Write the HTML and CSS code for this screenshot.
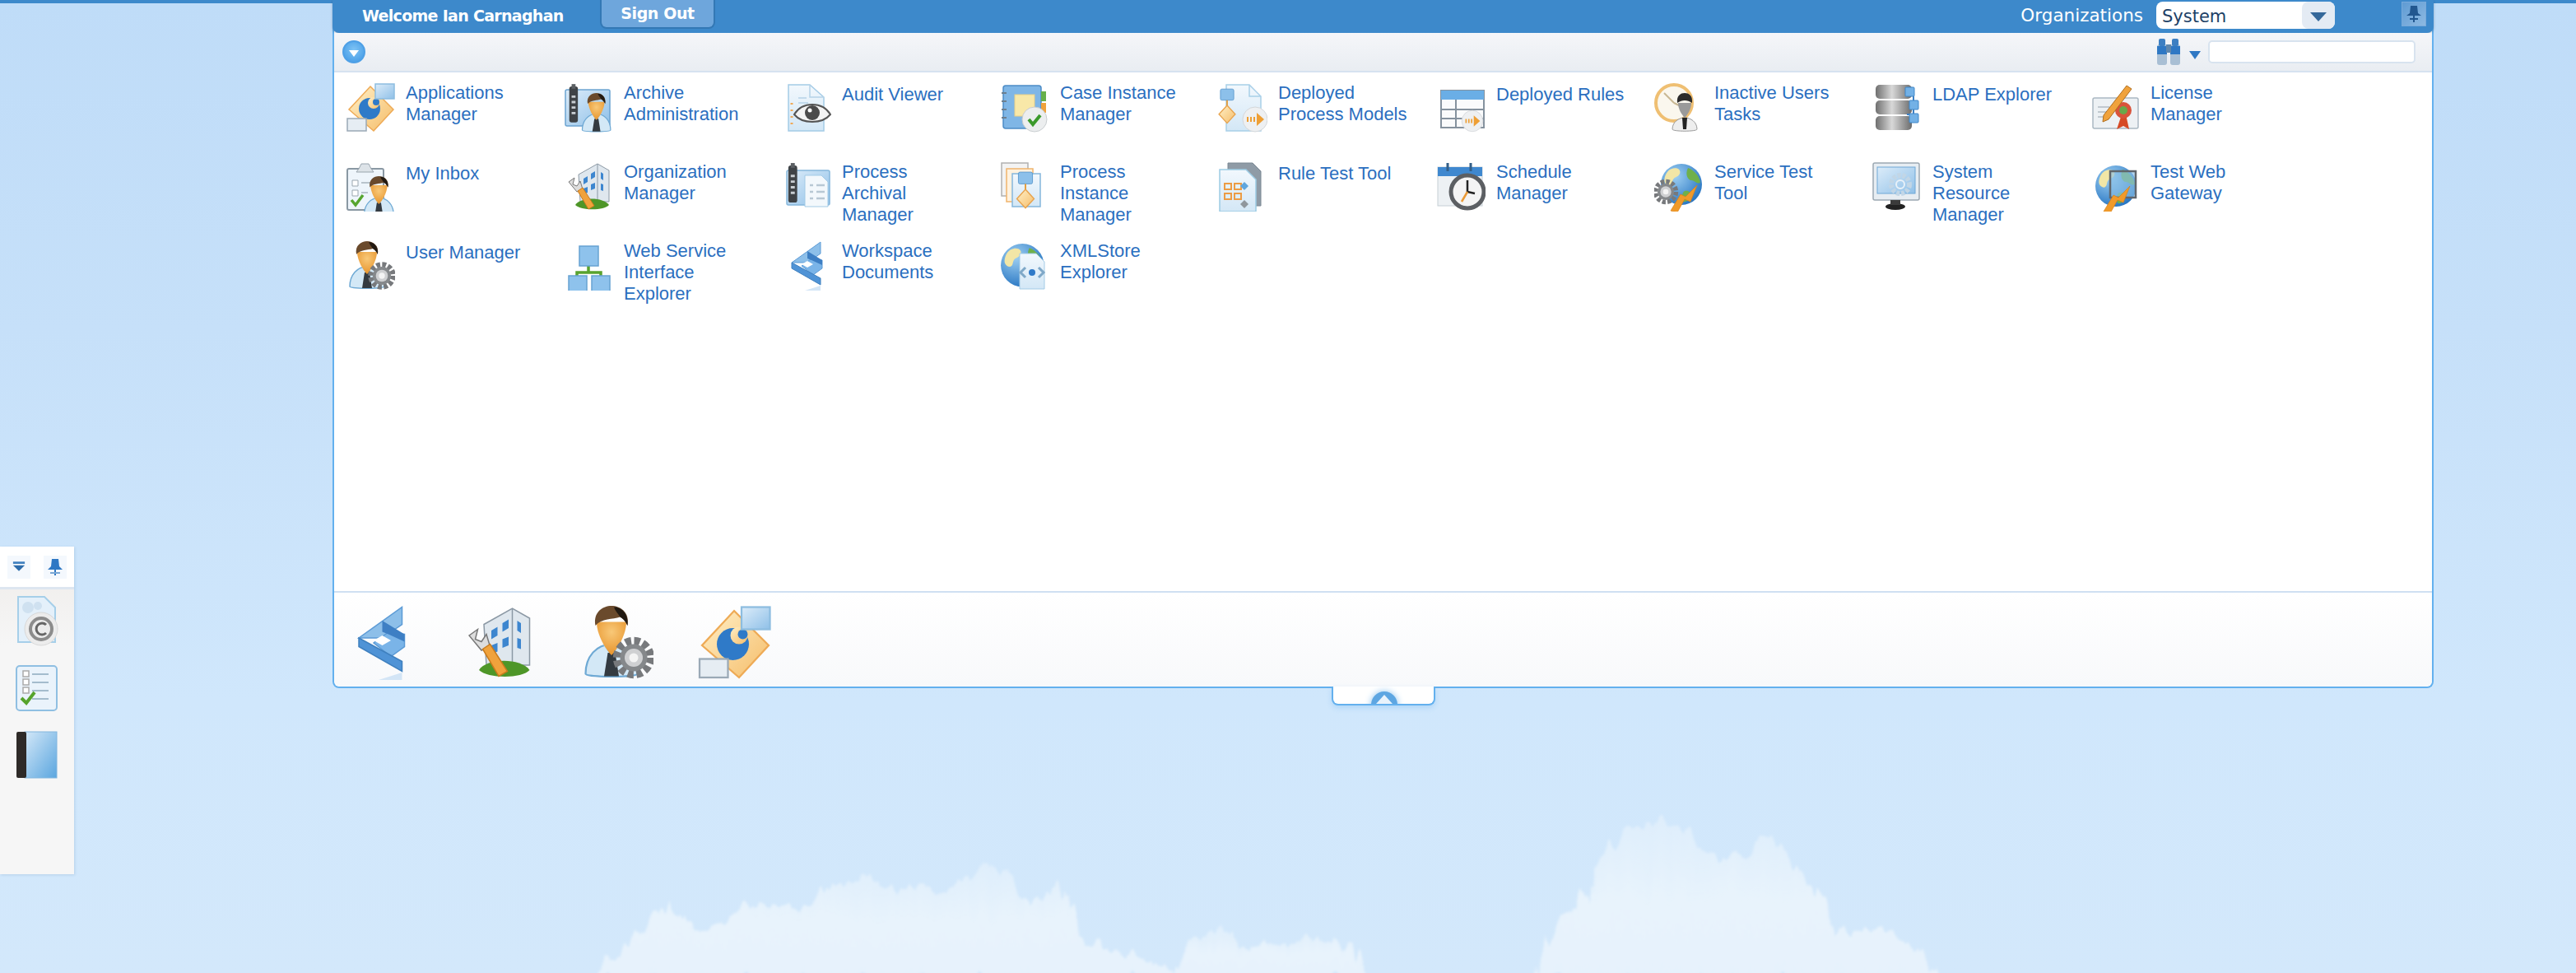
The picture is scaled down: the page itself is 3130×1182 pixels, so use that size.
FILE: index.html
```html
<!DOCTYPE html>
<html lang="en">
<head>
    <meta charset="UTF-8" />
    <title>Welcome</title>
    <link rel="stylesheet" href="styles.css">
</head>
<body>
    <svg class="clouds" viewBox="0 0 3130 1182" width="3130" height="1182">
        <defs>
            <filter id="soft" x="-5%" y="-20%" width="110%" height="140%">
                <feTurbulence type="fractalNoise" baseFrequency="0.07 0.006" numOctaves="3" seed="4" result="noise" />
                <feDisplacementMap in="SourceGraphic" in2="noise" scale="34" xChannelSelector="G" yChannelSelector="R" />
                <feGaussianBlur stdDeviation="1.6" />
            </filter>
            <linearGradient id="cloudfade" x1="0" y1="0" x2="0" y2="1">
                <stop offset="0" stop-color="#e3f0fc" stop-opacity=".75" />
                <stop offset=".5" stop-color="#e8f3fc" />
                <stop offset="1" stop-color="#e6f2fc" />
            </linearGradient>
        </defs>
        <g filter="url(#soft)" fill="url(#cloudfade)">
            <path d="M720 1190L790 1120 812 1097 842 1130 915 1100 975 1100 1048 1062 1085 1078 1145 1078 1206 1043 1254 1100 1290 1067 1315 1140 1351 1155 1424 1175 1424 1190z" />
            <path d="M1424 1190L1440 1150 1479 1127 1521 1155 1582 1140 1642 1150 1667 1190z" />
            <path d="M1867 1190L1885 1130 1921 1100 1933 1050 1975 1010 2012 997 2050 1010 2090 1050 2125 1035 2151 1013 2182 1050 2224 1100 2236 1135 2285 1127 2325 1150 2357 1190z" />
        </g>
    </svg>
    <div class="top-line"></div>

    <div class="dock">
        <div class="dock-head">
            <span class="dock-btn">
                <svg width="16" height="13" viewBox="0 0 18 14"><rect x="1" width="16" height="3" fill="#3f7fbe"/><path d="M1 5h16l-8 8z" fill="#2e6cab"/></svg>
            </span>
            <span class="dock-btn">
                <svg width="20" height="24" viewBox="0 0 20 24"><use href="#pin"/></svg>
            </span>
        </div>
        <div class="dock-items">
            <svg class="dock-icon" width="54" height="62" viewBox="0 0 54 62">
                <path d="M4 1h32l13 13v42H4z" fill="#e4f0fa" stroke="#a6cfe9" stroke-width="2"/>
                <circle cx="16" cy="14" r="7" fill="#cfe1f0"/><circle cx="28" cy="12" r="5" fill="#cfe1f0"/>
                <circle cx="32" cy="40" r="20" fill="#ececec" stroke="#d8d8d8"/>
                <circle cx="32" cy="40" r="13" fill="none" stroke="#8c8c8c" stroke-width="4"/>
                <path d="M38 35a7 7 0 1 0 0 10" fill="none" stroke="#666" stroke-width="3"/>
            </svg>
            <svg class="dock-icon" width="52" height="58" viewBox="0 0 52 58">
                <rect x="1" y="1" width="49" height="54" rx="4" fill="#eaf3fb" stroke="#8fbfe2" stroke-width="2"/>
                <path d="M20 11h20M20 21h20M20 31h20M20 41h20" stroke="#a4bccd" stroke-width="2"/>
                <path d="M9 7h7v7H9zM9 17h7v7H9zM9 27h7v7H9z" fill="#fff" stroke="#aaa" stroke-width="1.5"/>
                <path d="M7 40l6 6 10-13" fill="none" stroke="#55a32c" stroke-width="4"/>
            </svg>
            <svg class="dock-icon" width="50" height="58" viewBox="0 0 50 58">
                <defs><linearGradient id="bookg" x1="0" y1="0" x2="1" y2="1"><stop offset="0" stop-color="#d4e8f8"/><stop offset="1" stop-color="#5ba6df"/></linearGradient></defs>
                <rect x="10" y="1" width="39" height="56" fill="url(#bookg)" stroke="#82b6de"/>
                <rect x="0" y="1" width="12" height="56" rx="2" fill="#2e2a28"/>
            </svg>
        </div>
    </div>

    <div class="panel">
        <div class="top-bar">
            <span class="welcome">Welcome Ian Carnaghan</span>
            <span class="sign-out">Sign Out</span>
            <span class="spacer"></span>
            <span class="org-label">Organizations</span>
            <div class="org-select">
                <span class="org-value">System</span>
                <span class="org-arrow"></span>
            </div>
            <span class="pin-btn"><svg width="20" height="26" viewBox="0 0 20 24"><use href="#pin-dark"/></svg></span>
        </div>

        <div class="tool-bar">
            <span class="round-btn"></span>
            <span class="spacer"></span>
            <svg class="binoculars" width="30" height="34" viewBox="0 0 30 34">
                <rect x="1" y="8" width="12" height="25" rx="3" fill="#a9bfd4"/><rect x="17" y="8" width="12" height="25" rx="3" fill="#a9bfd4"/>
                <rect x="3" y="1" width="8" height="9" rx="2" fill="#3d7fc2"/><rect x="19" y="1" width="8" height="9" rx="2" fill="#3d7fc2"/>
                <rect x="1" y="10" width="12" height="10" fill="#2f78c4"/><rect x="17" y="10" width="12" height="10" fill="#2f78c4"/>
                <rect x="12" y="8" width="6" height="10" fill="#5f87ad"/>
            </svg>
            <span class="small-arrow"></span>
            <span class="search-box"></span>
        </div>

        <div class="apps">
            <a class="app"><svg class="icon" viewBox="0 0 60 60"><use href="#i-apps"/></svg><span class="two">Applications Manager</span></a>
            <a class="app"><svg class="icon" viewBox="0 0 60 60"><use href="#i-archive"/></svg><span class="two">Archive Administration</span></a>
            <a class="app"><svg class="icon" viewBox="0 0 60 60"><use href="#i-audit"/></svg><span>Audit Viewer</span></a>
            <a class="app"><svg class="icon" viewBox="0 0 60 60"><use href="#i-case"/></svg><span class="two">Case Instance Manager</span></a>
            <a class="app"><svg class="icon" viewBox="0 0 60 60"><use href="#i-deployed"/></svg><span class="two">Deployed Process Models</span></a>
            <a class="app"><svg class="icon" viewBox="0 0 60 60"><use href="#i-rules"/></svg><span>Deployed Rules</span></a>
            <a class="app"><svg class="icon" viewBox="0 0 60 60"><use href="#i-inactive"/></svg><span class="two">Inactive Users Tasks</span></a>
            <a class="app"><svg class="icon" viewBox="0 0 60 60"><use href="#i-ldap"/></svg><span>LDAP Explorer</span></a>
            <a class="app"><svg class="icon" viewBox="0 0 60 60"><use href="#i-license"/></svg><span class="two">License Manager</span></a>

            <a class="app"><svg class="icon" viewBox="0 0 60 60"><use href="#i-inbox"/></svg><span>My Inbox</span></a>
            <a class="app"><svg class="icon" viewBox="0 0 60 60"><use href="#i-org"/></svg><span class="two">Organization Manager</span></a>
            <a class="app"><svg class="icon" viewBox="0 0 60 60"><use href="#i-parchive"/></svg><span class="two">Process Archival Manager</span></a>
            <a class="app"><svg class="icon" viewBox="0 0 60 60"><use href="#i-pinstance"/></svg><span class="two">Process Instance Manager</span></a>
            <a class="app"><svg class="icon" viewBox="0 0 60 60"><use href="#i-ruletest"/></svg><span>Rule Test Tool</span></a>
            <a class="app"><svg class="icon" viewBox="0 0 60 60"><use href="#i-schedule"/></svg><span class="two">Schedule Manager</span></a>
            <a class="app"><svg class="icon" viewBox="0 0 60 60"><use href="#i-service"/></svg><span class="two">Service Test Tool</span></a>
            <a class="app"><svg class="icon" viewBox="0 0 60 60"><use href="#i-system"/></svg><span class="two">System Resource Manager</span></a>
            <a class="app"><svg class="icon" viewBox="0 0 60 60"><use href="#i-gateway"/></svg><span class="two">Test Web Gateway</span></a>

            <a class="app"><svg class="icon" viewBox="0 0 60 60"><use href="#i-user"/></svg><span>User Manager</span></a>
            <a class="app"><svg class="icon" viewBox="0 0 60 60"><use href="#i-webservice"/></svg><span class="two">Web Service Interface Explorer</span></a>
            <a class="app"><svg class="icon" viewBox="0 0 60 60"><use href="#i-workspace"/></svg><span class="two">Workspace Documents</span></a>
            <a class="app"><svg class="icon" viewBox="0 0 60 60"><use href="#i-xmlstore"/></svg><span class="two">XMLStore Explorer</span></a>
        </div>

        <div class="quick-bar">
            <svg class="quick" viewBox="0 0 60 60"><use href="#i-workspace"/></svg>
            <svg class="quick" viewBox="0 0 60 60"><use href="#i-org"/></svg>
            <svg class="quick" viewBox="0 0 60 60"><use href="#i-user"/></svg>
            <svg class="quick" viewBox="0 0 60 60"><use href="#i-apps"/></svg>
        </div>
        <div class="pull-tab"><span class="pull-glow"></span><span class="pull-arrow"></span></div>
    </div>

    <svg class="sprites" width="0" height="0">
        <defs>
            <linearGradient id="blue" x1="0" y1="0" x2="1" y2="1"><stop offset="0" stop-color="#dcecf9"/><stop offset="1" stop-color="#8fc0e8"/></linearGradient>
            <linearGradient id="sheet" x1="0" y1="0" x2="0" y2="1"><stop offset="0" stop-color="#f2f8fd"/><stop offset="1" stop-color="#d3e7f6"/></linearGradient>
            <linearGradient id="steel" x1="0" y1="0" x2="1" y2="0"><stop offset="0" stop-color="#6f6f6f"/><stop offset=".45" stop-color="#d8d8d8"/><stop offset="1" stop-color="#6b6b6b"/></linearGradient>
            <linearGradient id="gold" x1="0" y1="0" x2="1" y2="1"><stop offset="0" stop-color="#fff0c8"/><stop offset="1" stop-color="#f5bd6a"/></linearGradient>
            <radialGradient id="earth" cx=".35" cy=".3" r=".8"><stop offset="0" stop-color="#9fd0f2"/><stop offset="1" stop-color="#1f6fbf"/></radialGradient>
            <radialGradient id="face" cx=".5" cy=".3" r=".8"><stop offset="0" stop-color="#f8c878"/><stop offset="1" stop-color="#e58d22"/></radialGradient>
            <linearGradient id="pinbg" x1="0" y1="0" x2="1" y2="1"><stop offset="0" stop-color="#5f9bd3"/><stop offset="1" stop-color="#8db9e2"/></linearGradient>

            <g id="pin"><path d="M6 2h8l1 9 4 4H1l4-4z" fill="#2f78c4"/><rect x="9" y="15" width="2" height="7" fill="#2f78c4"/><rect x="4" y="18" width="12" height="2" fill="#7aa7d4"/></g>
            <g id="pin-dark"><path d="M6 2h8l1 9 4 3H1l4-3z" fill="#22578f"/><rect x="9" y="14" width="2" height="8" fill="#22578f"/><rect x="5" y="17" width="10" height="2" fill="#22578f"/></g>

            <g id="person">
                <path d="M3 55c0-14 9-24 21-24s21 10 21 24c0 3-42 3-42 0z" fill="#d3e8f6" stroke="#6ea9d4" stroke-width="1.5"/>
                <path d="M17 31l7 10 7-10z" fill="#a8d0ec"/>
                <path d="M21 38h6l3 19H18z" fill="#333a40"/>
                <path d="M12 13c0 11 8 23 12 27 4-4 12-16 12-27z" fill="url(#face)"/>
                <path d="M11 16C9 5 17 0 24 0s15 5 13 16c-2-4-4-6-6-7-6 2-15 1-20 7z" fill="#6a4a2c"/>
                <path d="M26 1c6 0 12 5 11 15-2-4-4-6-6-7-2-3-4-5-5-8z" fill="#221a12"/>
            </g>
            <g id="gear">
                <circle r="13" fill="none" stroke="#77797c" stroke-width="6" stroke-dasharray="4.5 2.3"/>
                <circle r="10.5" fill="#85888b"/>
                <circle r="7" fill="#cfd0d2"/><circle r="3.5" fill="#f4f4f4"/>
            </g>
            <g id="globe">
                <circle cx="26" cy="26" r="25" fill="url(#earth)"/>
                <path d="M12 8c8-4 14 0 12 5s-8 3-9 10-7 5-9 1 1-13 6-16z" fill="#f2e6a6"/>
                <path d="M34 6c8 3 14 10 15 18-5 2-7-3-11-3s-8-7-4-15zM30 34c5-1 8 2 7 6s-5 8-8 7-3-11 1-13z" fill="#6fb04a"/>
            </g>
            <g id="bolt"><path d="M4 58l12-20 6 3 14-14-8 20-7-3-9 16z" fill="#f09a2a" stroke="#d87f16" stroke-width=".7"/></g>
            <g id="arrow-disc">
                <circle r="15" fill="#eef0f2" stroke="#d4d7da"/>
                <path d="M-10-3h2v6h-2zM-6-3h2v6h-2zM-2-3h2v6h-2zM2-8l9 8-9 8z" fill="#ee9f35"/>
            </g>
            <g id="flow">
                <rect x="-9" y="-22" width="18" height="15" rx="2" fill="#8cc0ea" stroke="#5e9bcf"/>
                <rect x="-1" y="-7" width="2" height="8" fill="#e39b38"/>
                <path d="M0 0l11 12-11 12-11-12z" fill="url(#gold)" stroke="#e8a34d" stroke-width="1.5"/>
            </g>
            <g id="tower">
                <rect x="6" y="0" width="11" height="46" rx="3" fill="#3f4347"/>
                <rect x="9" y="-3" width="5" height="6" fill="#5b5f63"/>
                <path d="M9 13h5M9 20h5M9 27h5M9 34h5" stroke="#c8cdd2" stroke-width="3"/>
            </g>

            <g id="i-apps">
                <path d="M30 4L58 32 34 58 4 32z" fill="url(#gold)" stroke="#eeaa55" stroke-width="1.5"/>
                <circle cx="29" cy="31" r="13" fill="#2f7ac8"/><circle cx="34" cy="24" r="7" fill="url(#gold)"/><circle cx="37" cy="23" r="4" fill="#2f7ac8"/>
                <rect x="36" y="1" width="23" height="18" fill="url(#blue)" stroke="#8dbde0" stroke-width="1.5"/>
                <rect x="2" y="43" width="23" height="15" fill="#e6edf3" stroke="#9aa9b6" stroke-width="1.5"/>
            </g>
            <g id="i-archive">
                <rect x="2" y="8" width="54" height="44" rx="2" fill="url(#blue)" stroke="#6ca4d1" stroke-width="1.5"/>
                <use href="#tower" transform="translate(1 4) scale(.95)"/>
                <use href="#person" transform="translate(20 12) scale(.82)"/>
            </g>
            <g id="i-audit">
                <path d="M8 2h26l17 15v41H8z" fill="url(#sheet)" stroke="#a4cbe6" stroke-width="1.5"/>
                <path d="M34 2v15h17M20 18h10M20 24h12" fill="none" stroke="#b5d2e8" stroke-width="1.5"/>
                <path d="M12 24v2M12 32v2M12 40v2M12 48v2" stroke="#efa958" stroke-width="3"/>
                <path d="M15 38c10-16 34-16 44 0-10 12-34 12-44 0z" fill="#f3f3f3" stroke="#555" stroke-width="2"/>
                <circle cx="37" cy="36" r="9" fill="#4a4a4a"/><circle cx="34" cy="33" r="2.5" fill="#fff"/>
            </g>
            <g id="i-case">
                <rect x="4" y="3" width="46" height="52" rx="3" fill="#7fb6e6" stroke="#4c8cc6" stroke-width="1.5"/>
                <rect x="50" y="10" width="6" height="12" fill="#67b04a"/><rect x="50" y="24" width="6" height="12" fill="#f0a23c"/>
                <path d="M2 12h6M2 22h6M2 32h6M2 42h6" stroke="#6d7f8f" stroke-width="2"/>
                <rect x="18" y="14" width="24" height="26" fill="#f8e8a8" stroke="#ead088"/>
                <circle cx="42" cy="44" r="15" fill="#eceeef" stroke="#c8cccf"/>
                <path d="M35 44l5 6 9-11" fill="none" stroke="#3b9a2b" stroke-width="4"/>
            </g>
            <g id="i-deployed">
                <path d="M10 2h28l14 14v42H10z" fill="url(#sheet)" stroke="#a8cfe8" stroke-width="1.5"/>
                <path d="M38 2v14h14" fill="none" stroke="#a8cfe8" stroke-width="1.5"/>
                <use href="#flow" transform="translate(11 27) scale(.9)"/>
                <use href="#arrow-disc" transform="translate(45 44)"/>
            </g>
            <g id="i-rules">
                <rect x="6" y="9" width="52" height="45" fill="#fafbfc" stroke="#85929e" stroke-width="2"/>
                <rect x="6" y="9" width="52" height="11" fill="#6aaee6"/>
                <path d="M6 32h52M24 20v34M6 43h52" stroke="#85929e" stroke-width="2"/>
                <use href="#arrow-disc" transform="translate(44 46) scale(.85)"/>
            </g>
            <g id="i-inactive">
                <circle cx="24" cy="24" r="22" fill="#faf7ee" stroke="#efbf72" stroke-width="4"/>
                <path d="M24 24L12 12M24 24L36 30" stroke="#c8b894" stroke-width="2"/>
                <path d="M22 56c0-9 8-14 15-14s15 5 15 14c0 3-30 3-30 0z" fill="#eee" stroke="#999"/>
                <path d="M34 42h6l-1 14h-4z" fill="#222"/>
                <path d="M29 24c0 8 5 15 8 18 3-3 8-10 8-18z" fill="#9a9a9a"/>
                <path d="M28 24c-1-9 4-12 9-12s10 3 9 12c-6-4-12-4-18 0z" fill="#2b2b2b"/>
            </g>
            <g id="i-ldap">
                <rect x="4" y="2" width="44" height="17" rx="5" fill="url(#steel)"/>
                <rect x="4" y="21" width="44" height="17" rx="5" fill="url(#steel)"/>
                <rect x="4" y="40" width="44" height="17" rx="5" fill="url(#steel)"/>
                <path d="M42 10h8v28h-8" fill="none" stroke="#3d80c4" stroke-width="2"/>
                <rect x="40" y="5" width="11" height="11" rx="1" fill="#73b1e6" stroke="#3f86c8"/>
                <rect x="45" y="21" width="11" height="11" rx="1" fill="#73b1e6" stroke="#3f86c8"/>
                <rect x="45" y="37" width="11" height="11" rx="1" fill="#73b1e6" stroke="#3f86c8"/>
            </g>
            <g id="i-license">
                <rect x="3" y="18" width="55" height="37" rx="2" fill="#edf1f4" stroke="#aab8c2" stroke-width="1.5"/>
                <path d="M9 29h14M9 35h16M9 41h12" stroke="#c0c8cf" stroke-width="2"/>
                <path d="M38 38l-6 18 8-4 7 4-4-18z" fill="#d64a25"/>
                <circle cx="40" cy="33" r="10" fill="#d9533a"/><circle cx="40" cy="33" r="5" fill="#69a84a"/>
                <path d="M44 3l6 4-28 37-7 3 1-8z" fill="#f0a23c" stroke="#b06f20"/>
            </g>
            <g id="i-inbox">
                <rect x="2" y="8" width="44" height="50" rx="2" fill="#eef5fb" stroke="#8a98a3" stroke-width="2"/>
                <path d="M16 8l3-6h9l3 6 3 4H13z" fill="#dde3e8" stroke="#98a4ad"/>
                <path d="M8 22h7v7H8zM8 34h7v7H8z" fill="#fff" stroke="#9ba7b0"/>
                <path d="M19 25h12M19 37h8" stroke="#b9c4cc" stroke-width="2"/>
                <path d="M7 46l5 6 9-12" fill="none" stroke="#57a52f" stroke-width="3.5"/>
                <use href="#person" transform="translate(20 17) scale(.85)"/>
            </g>
            <g id="i-org">
                <path d="M18 15l23-13 14 8v38H20z" fill="#dfe7ee" stroke="#8b98a4"/>
                <path d="M41 2v50" stroke="#8b98a4"/>
                <path d="M24 20l5-3v7l-5 3zM33 14l5-3v7l-5 3zM24 32l5-2v7l-5 2zM33 27l5-2v7l-5 2zM45 12l3 2v8l-3-2zM45 26l3 1v8l-3-1z" fill="#3d86cf"/>
                <path d="M14 52c6-10 34-10 41 0-6 7-34 7-41 0z" fill="#4e9628"/>
                <path d="M6 24l7-5-2 8 5 2 4-6 3 10-7 3z" fill="#ddd" stroke="#777"/>
                <path d="M17 35l6-4 14 22-7 4z" fill="#f0a23c" stroke="#c97b1d"/>
            </g>
            <g id="i-parchive">
                <rect x="6" y="10" width="52" height="42" rx="2" fill="url(#blue)" stroke="#85b7dc" stroke-width="1.5"/>
                <path d="M28 16h20l8 8v30H28z" fill="#f3f8fc" stroke="#a3cbe6"/>
                <path d="M34 28h4M42 28h10M34 36h4M42 36h10M34 44h4M42 44h10" stroke="#b8c8d4" stroke-width="2.5"/>
                <use href="#tower" transform="translate(2 4) scale(.98)"/>
            </g>
            <g id="i-pinstance">
                <rect x="2" y="1" width="32" height="40" fill="#f3f3f3" stroke="#b1b1b1" stroke-width="1.5"/>
                <rect x="8" y="8" width="32" height="40" fill="#fff2df" stroke="#f0b46c" stroke-width="1.5"/>
                <rect x="15" y="14" width="34" height="40" fill="url(#sheet)" stroke="#85b7dc" stroke-width="1.5"/>
                <use href="#flow" transform="translate(31 33) scale(.95)"/>
            </g>
            <g id="i-ruletest">
                <path d="M12 1h30l10 10v42H12z" fill="#8f9ba6" stroke="#7b8894"/>
                <path d="M2 9h32l12 12v39H2z" fill="url(#sheet)" stroke="#9ccbe4" stroke-width="1.5"/>
                <path d="M8 26h8v7H8zM20 26h8v7H20zM8 38h8v7H8zM20 38h8v7H20z" fill="none" stroke="#ec9c44" stroke-width="2"/>
                <path d="M32 24l5 5-5 5-5-5z" fill="#5fa6de"/><path d="M32 46l5 5-5 5-5-5z" fill="#90979d"/>
            </g>
            <g id="i-schedule">
                <rect x="2" y="6" width="54" height="47" fill="#edf1f4" stroke="#c6cfd6"/>
                <rect x="2" y="6" width="54" height="11" fill="#3f88cf"/>
                <path d="M14 1v10M42 1v10" stroke="#335f88" stroke-width="3"/>
                <circle cx="38" cy="36" r="20" fill="#f4f4f4" stroke="#5c5f63" stroke-width="5"/>
                <path d="M38 22v14l9 2" fill="none" stroke="#222" stroke-width="2.5"/><path d="M38 36l-7 12" stroke="#ea9a37" stroke-width="2.5"/>
            </g>
            <g id="i-service">
                <use href="#globe" transform="translate(7 1)"/>
                <use href="#gear" transform="translate(14 36) scale(.95)"/>
                <use href="#bolt" transform="translate(16 1)"/>
            </g>
            <g id="i-system">
                <rect x="1" y="1" width="56" height="45" rx="2" fill="#e7edf2" stroke="#9ca8b2" stroke-width="1.5"/>
                <rect x="6" y="6" width="46" height="32" fill="url(#blue)" stroke="#6fa8d6"/>
                <circle cx="34" cy="27" r="11" fill="none" stroke="#c2d6e6" stroke-width="6" stroke-dasharray="4 2"/>
                <circle cx="34" cy="27" r="5" fill="none" stroke="#e8f1f8" stroke-width="2"/>
                <ellipse cx="28" cy="54" rx="12" ry="4" fill="#222"/><rect x="22" y="46" width="12" height="6" fill="#3b3b3b"/>
            </g>
            <g id="i-gateway">
                <use href="#globe" transform="translate(5 3)"/>
                <rect x="24" y="11" width="31" height="32" fill="#8ac0e6" fill-opacity=".65" stroke="#60666c" stroke-width="2.5"/>
                <use href="#bolt" transform="translate(12 2)"/>
            </g>
            <g id="i-user">
                <use href="#person" transform="translate(2 0)"/>
                <use href="#gear" transform="translate(44 42) scale(1.05)"/>
            </g>
            <g id="i-webservice">
                <path d="M30 30v8M16 46v-8h29v8" fill="none" stroke="#59a32e" stroke-width="3.5"/>
                <rect x="19" y="6" width="23" height="24" fill="#8ec2ec" stroke="#67a3d2" stroke-width="1.5"/>
                <rect x="6" y="42" width="22" height="19" fill="#8ec2ec" stroke="#67a3d2" stroke-width="1.5"/>
                <rect x="34" y="42" width="22" height="19" fill="#8ec2ec" stroke="#67a3d2" stroke-width="1.5"/>
            </g>
            <g id="i-workspace">
                <path d="M47 54L28 60h19z" fill="#d3e5f6"/>
                <path d="M47 1v14L31 26H12z" fill="#8dbfe9" stroke="#5c9bd6"/>
                <path d="M49 23v10L38 41 24 30l11-8z" fill="#7ab4e8" stroke="#5c9bd6"/>
                <path d="M31 12l18 11v6l-13-6-5-2z" fill="#3e7fc4"/>
                <path d="M12 26l35 19v8L12 33z" fill="#4f93d6" stroke="#3f80bf"/>
                <path d="M31 24l7 4-7 4-7-4z" fill="#fff"/>
            </g>
            <g id="i-xmlstore">
                <use href="#globe" transform="translate(0 2) scale(1.05)"/>
                <path d="M24 15h20l10 10v33H24z" fill="url(#sheet)" stroke="#a3cbe6"/>
                <circle cx="39" cy="38" r="4" fill="#2f7ac8"/>
                <path d="M31 32l-6 6 6 6M47 32l6 6-6 6" fill="none" stroke="#7fa8c8" stroke-width="3"/>
            </g>
        </defs>
    </svg>
</body>
</html>
```
FILE: styles.css
```css
* {
    box-sizing: border-box;
}

html,
body {
    margin: 0;
    height: 100%;
}

body {
    position: relative;
    width: 3130px;
    height: 1182px;
    overflow: hidden;
    font-family: "Liberation Sans", Arial, sans-serif;
    background: linear-gradient(to bottom, #bfdcf8 0, #c6e0f9 400px, #d0e7fc 850px, #d3e8fb 1182px);
}

.clouds {
    position: absolute;
    left: 0;
    top: 0;
}

.sprites {
    position: absolute;
}

.top-line {
    position: absolute;
    left: 0;
    top: 0;
    width: 100%;
    height: 4px;
    background-color: #3d89cb;
}

.spacer {
    flex-grow: 1;
}

.panel {
    position: absolute;
    left: 404px;
    top: 0;
    width: 2553px;
    height: 836px;
    display: flex;
    flex-direction: column;
    background-color: white;
    border: 2px solid #63b0ee;
    border-top: 0;
    border-radius: 0 0 8px 8px;
}

.top-bar {
    display: flex;
    align-items: center;
    height: 40px;
    margin: 0 -2px;
    padding-left: 36px;
    padding-right: 9px;
    background-color: #3d89cb;
    border-radius: 0 0 8px 8px;
    box-shadow: 0 1px 3px rgba(30, 60, 100, 0.35);
    color: white;
    font-family: "DejaVu Sans", Verdana, sans-serif;
    font-size: 20px;
}

.welcome {
    width: 289px;
    margin-top: -3px;
    font-size: 19px;
    font-weight: bold;
    letter-spacing: -0.7px;
}

.sign-out {
    width: 140px;
    height: 35px;
    margin-top: -5px;
    line-height: 33px;
    text-align: center;
    font-size: 19px;
    font-weight: bold;
    letter-spacing: -0.4px;
    background-color: #6ea6dc;
    border: 2px solid #3378b5;
    border-top: 0;
    border-radius: 0 0 8px 8px;
}

.org-label {
    margin-right: 16px;
    margin-top: -3px;
    font-size: 21.5px;
}

.org-select {
    display: flex;
    width: 217px;
    height: 33px;
    margin-right: 81px;
    margin-top: -3px;
    background-color: white;
    border-radius: 8px;
    overflow: hidden;
}

.org-value {
    flex-grow: 1;
    padding-left: 7px;
    line-height: 36px;
    font-size: 21px;
    color: #203f66;
}

.org-arrow {
    position: relative;
    width: 40px;
    background-color: #e4ebf4;
    border-radius: 8px 0 0 8px;
}

.org-arrow::after {
    content: "";
    position: absolute;
    left: 10px;
    top: 13px;
    border-style: solid;
    border-width: 11px 10px 0;
    border-color: #35689a transparent transparent;
}

.pin-btn {
    display: flex;
    justify-content: center;
    align-items: center;
    width: 30px;
    height: 30px;
    margin-top: -7px;
    background: linear-gradient(135deg, #5f9bd3, #8db9e2);
    border: 1px solid #78aadb;
}

.tool-bar {
    display: flex;
    align-items: center;
    height: 48px;
    padding-left: 10px;
    padding-right: 20px;
    background: linear-gradient(to bottom, #f5f6f9, #e9edf2);
    border-bottom: 2px solid #d6e2f0;
}

.round-btn {
    position: relative;
    width: 28px;
    height: 28px;
    border-radius: 50%;
    background: radial-gradient(circle at 50% 40%, #7fc4f5, #3d96e4);
    border: 2px solid #4fa0e6;
}

.round-btn::after {
    content: "";
    position: absolute;
    left: 6px;
    top: 10px;
    border-style: solid;
    border-width: 8px 6px 0;
    border-color: white transparent transparent;
}

.binoculars {
    margin-right: 10px;
}

.small-arrow {
    width: 0;
    height: 0;
    margin-top: 8px;
    margin-right: 9px;
    border-style: solid;
    border-width: 10px 7px 0;
    border-color: #2f78c4 transparent transparent;
}

.search-box {
    width: 252px;
    height: 28px;
    background-color: white;
    border: 2px solid #d8e3ef;
    border-radius: 5px;
}

.apps {
    flex-grow: 1;
    display: grid;
    grid-template-columns: repeat(auto-fill, 265px);
    grid-auto-rows: 96px;
    align-content: start;
    padding-top: 12px;
    padding-left: 14px;
}

.app {
    display: flex;
    gap: 13px;
    color: #2b6fc0;
    font-size: 22px;
    line-height: 26px;
}

.app span {
    width: 158px;
    padding-top: 2px;
}

.app span.two {
    padding-top: 0;
}

.icon {
    flex: none;
    width: 60px;
    height: 60px;
    margin-top: 1px;
    filter: blur(0.5px);
}

.quick-bar {
    display: flex;
    gap: 53px;
    align-items: center;
    height: 116px;
    padding-left: 12px;
    padding-top: 8px;
    border-top: 2px solid #cfe0f2;
    background: linear-gradient(to bottom, white, #f8f9fb);
    border-radius: 0 0 8px 8px;
}

.quick {
    width: 90px;
    height: 90px;
    filter: blur(0.7px);
}

.pull-tab {
    position: absolute;
    left: 1212px;
    top: 834px;
    width: 126px;
    height: 23px;
    background-color: white;
    border: 2px solid #63b0ee;
    border-top: 0;
    border-radius: 0 0 8px 8px;
    box-shadow: 0 3px 6px rgba(99, 176, 238, 0.3);
    overflow: hidden;
}

.pull-glow {
    position: absolute;
    left: 46px;
    top: 6px;
    width: 32px;
    height: 32px;
    border-radius: 50%;
    background-color: #5da6e2;
    box-shadow: 0 0 8px #8cc2ee;
}

.pull-arrow {
    position: absolute;
    left: 52px;
    top: 10px;
    border-style: solid;
    border-width: 0 10px 11px;
    border-color: transparent transparent #e8f3fc;
}

.dock {
    position: absolute;
    left: 0;
    top: 664px;
    width: 90px;
    height: 398px;
    background: linear-gradient(to bottom, #eeebe8 0, #f6f6f6 30%, #f6f6f6 100%);
    box-shadow: 1px 1px 3px rgba(120, 160, 200, 0.3);
}

.dock-head {
    display: flex;
    justify-content: space-between;
    align-items: center;
    height: 52px;
    padding: 0 9px;
    background-color: white;
    border-bottom: 3px solid #dde6f0;
}

.dock-btn {
    display: flex;
    justify-content: center;
    align-items: center;
    width: 28px;
    height: 28px;
    background-color: #f4f8fd;
}

.dock-items {
    display: flex;
    flex-direction: column;
    align-items: center;
    gap: 22px;
    padding-top: 8px;
}

.dock-icon {
    filter: blur(0.5px);
}
```
